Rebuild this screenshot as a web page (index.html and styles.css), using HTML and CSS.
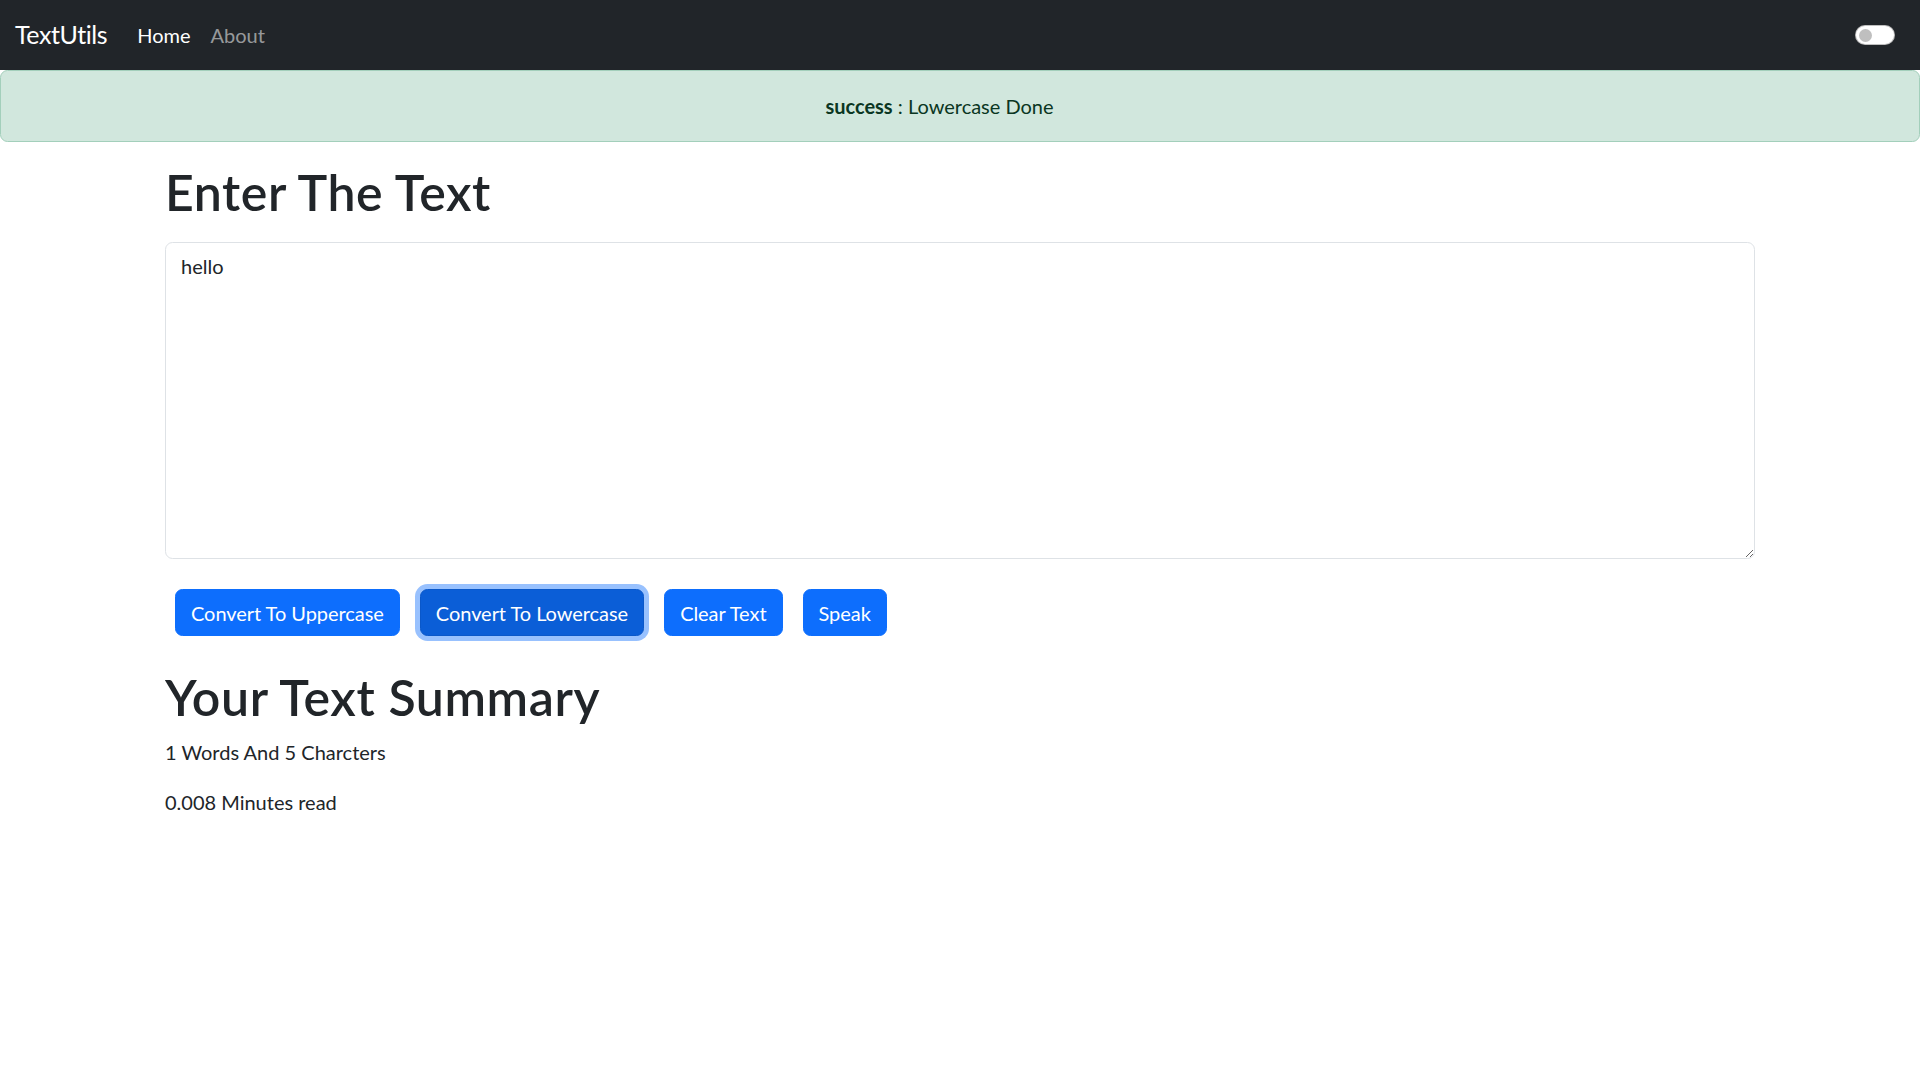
FILE: index.html
```html
<!DOCTYPE html>
<html lang="en">
<head>
<meta charset="utf-8">
<title>TextUtils</title>
<link rel="stylesheet" href="styles.css">
</head>
<body>
<nav class="navbar">
  <div class="nav-inner">
    <a class="brand" href="#">TextUtils</a>
    <ul class="nav-links">
      <li><a class="nav-link active" href="#">Home</a></li>
      <li><a class="nav-link" href="#">About</a></li>
    </ul>
    <div class="switch-wrap">
      <span class="switch"><span class="knob"></span></span>
    </div>
  </div>
</nav>
<div class="alert"><strong>success</strong> : Lowercase Done</div>
<main class="container">
  <h1 class="title">Enter The Text</h1>
  <textarea class="text-input" rows="10">hello</textarea>
  <div class="btn-row">
    <button class="btn">Convert To Uppercase</button>
    <button class="btn btn-focus">Convert To Lowercase</button>
    <button class="btn">Clear Text</button>
    <button class="btn">Speak</button>
  </div>
  <h1 class="title summary-title">Your Text Summary</h1>
  <p class="para">1 Words And 5 Charcters</p>
  <p class="para">0.008 Minutes read</p>
</main>
</body>
</html>
```
FILE: styles.css
```css
* { box-sizing: border-box; }
body {
  margin: 0;
  font-family: Lato, "Open Sans", sans-serif;
  font-size: 20px;
  line-height: 30px;
  color: #212529;
  background: #fff;
}
.navbar {
  background: #212529;
  height: 70px;
}
.nav-inner {
  height: 70px;
  padding: 0 15px;
  display: flex;
  align-items: center;
}
.brand {
  color: #fff;
  text-decoration: none;
  font-size: 25px;
  line-height: 37.5px;
  letter-spacing: -0.4px;
  margin-right: 20px;
}
.nav-links {
  list-style: none;
  margin: 0;
  padding: 0;
  display: flex;
  flex: 1;
}
.nav-link {
  display: block;
  padding: 10px;
  color: rgba(255, 255, 255, 0.55);
  text-decoration: none;
}
.nav-link.active { color: #fff; }
.switch-wrap {
  margin-right: 10px;
  display: flex;
  align-items: center;
}
.switch {
  width: 40px;
  height: 20px;
  border-radius: 10px;
  background: #fff;
  border: 1px solid rgba(0, 0, 0, 0.25);
  display: flex;
  align-items: center;
  padding-left: 3px;
}
.knob {
  width: 13px;
  height: 13px;
  border-radius: 50%;
  background: #bfbfbf;
}
.alert {
  background: #d1e7dd;
  border: 1px solid #a3cfbb;
  border-radius: 7.5px;
  color: #0a3622;
  padding: 20px 41px 20px 0;
  text-align: center;
  height: 72px;
  margin-bottom: 20px;
}
.alert strong { font-weight: 700; }
.container {
  width: 1590px;
  margin: 0 auto;
}
.title {
  font-size: 50px;
  line-height: 60px;
  font-weight: 600;
  letter-spacing: 0.6px;
  margin: 0 0 20px;
}
.text-input {
  display: block;
  width: 100%;
  height: 317px;
  padding: 7.5px 15px;
  font-family: inherit;
  font-size: 20px;
  line-height: 30px;
  color: #212529;
  border: 1px solid #dee2e6;
  border-radius: 7.5px;
  resize: vertical;
  margin: 0;
}
.btn-row {
  display: flex;
  gap: 20px;
  padding-left: 10px;
  margin-top: 30px;
}
.btn {
  font-family: inherit;
  font-size: 20px;
  line-height: 30px;
  letter-spacing: -0.05px;
  padding: 7.5px 15px;
  border: 1px solid #0d6efd;
  background: #0d6efd;
  color: #fff;
  border-radius: 7.5px;
  height: 47px;
}
.btn-focus {
  background: #0b5ed7;
  border-color: #0a58ca;
  box-shadow: 0 0 0 5px rgba(49, 132, 253, 0.5);
}
.summary-title {
  margin-top: 31px;
  margin-bottom: 10px;
}
.para {
  margin: 0 0 20px;
}
```
